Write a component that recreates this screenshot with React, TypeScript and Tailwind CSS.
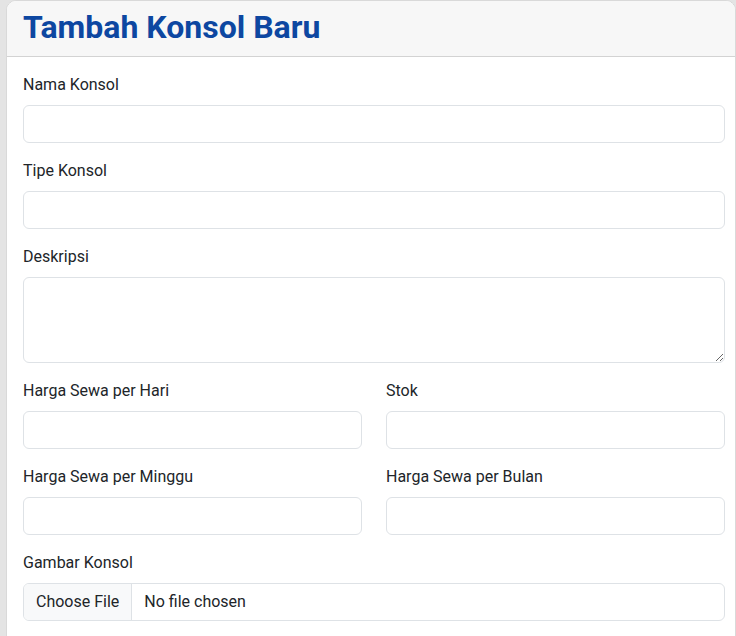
import React from "react";

const inputCls =
  "block w-full h-[38px] rounded-[6px] border border-[#dee2e6] bg-white px-3 text-[16px] text-[#212529] outline-none";

function Field({ label, children, className = "" }: { label: string; children: React.ReactNode; className?: string }) {
  return (
    <div className={"mb-4 " + className}>
      <label className="mb-2 block text-[16px] leading-[24px] text-[#212529]">{label}</label>
      {children}
    </div>
  );
}

export default function App() {
  return (
    <div className="min-h-[636px] bg-[#e4e4e4] pl-[6px] font-['Roboto',sans-serif]">
      <div className="min-h-[636px] rounded-t-[10px] border border-[#d9d9d9] bg-white">
        <div className="h-[56px] rounded-t-[9px] border-b border-[#d3d3d3] bg-[#f7f7f7] pl-4 pt-[7px]">
          <h1 className="m-0 text-[32px] font-bold leading-[39.6px] text-[#0d47a1]">Tambah Konsol Baru</h1>
        </div>
        <div className="pl-4 pr-[10px] pt-4">
          <Field label="Nama Konsol">
            <input type="text" className={inputCls} />
          </Field>
          <Field label="Tipe Konsol">
            <input type="text" className={inputCls} />
          </Field>
          <Field label="Deskripsi">
            <textarea
              rows={3}
              className="block h-[86px] w-full rounded-[6px] border border-[#dee2e6] bg-white px-3 py-[6px] text-[16px] text-[#212529] outline-none"
            />
          </Field>
          <div className="grid grid-cols-2 gap-x-6">
            <Field label="Harga Sewa per Hari">
              <input type="text" className={inputCls} />
            </Field>
            <Field label="Stok">
              <input type="text" className={inputCls} />
            </Field>
            <Field label="Harga Sewa per Minggu">
              <input type="text" className={inputCls} />
            </Field>
            <Field label="Harga Sewa per Bulan">
              <input type="text" className={inputCls} />
            </Field>
          </div>
          <Field label="Gambar Konsol">
            <div className="flex h-[38px] w-full items-stretch overflow-hidden rounded-[6px] border border-[#dee2e6] bg-white text-[16px] text-[#212529]">
              <span className="flex items-center border-r border-[#dee2e6] bg-[#f8f9fa] px-3">Choose File</span>
              <span className="flex items-center px-3">No file chosen</span>
            </div>
          </Field>
        </div>
      </div>
    </div>
  );
}
